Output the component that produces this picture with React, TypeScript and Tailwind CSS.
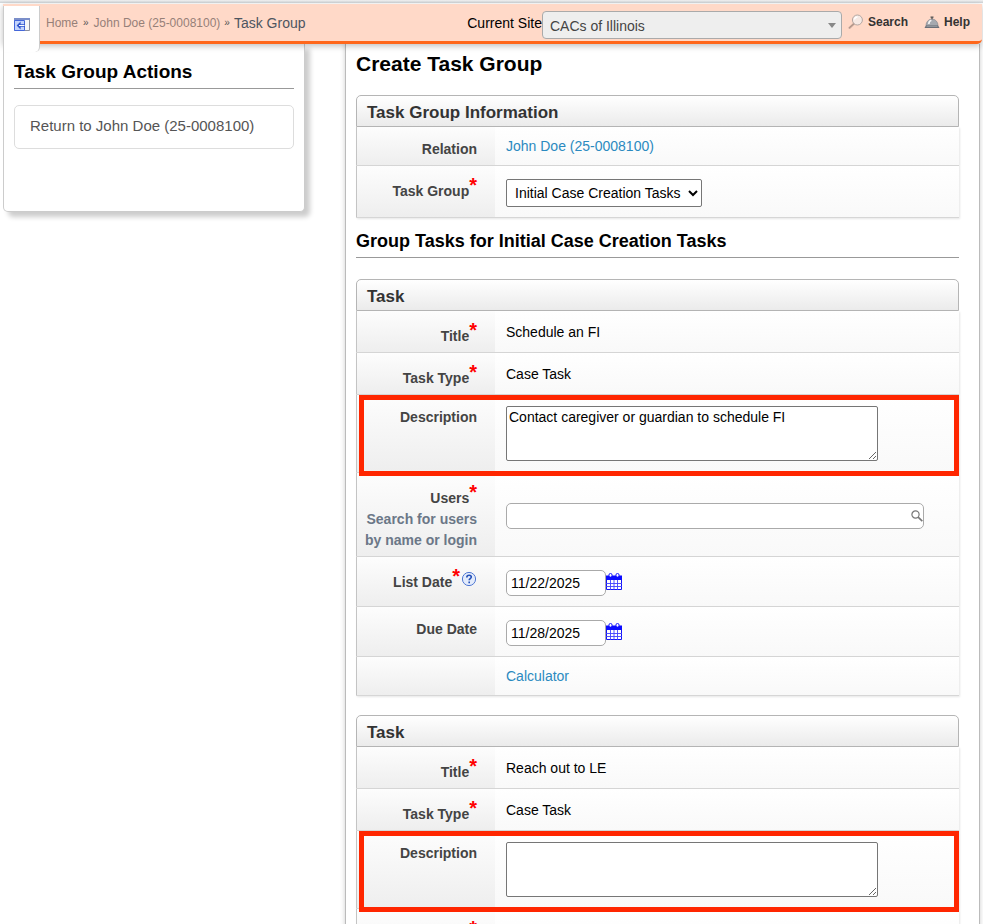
import React, { useId, useState } from "react";

type RowProps = {
  label?: string;
  hint?: string;
  htmlFor?: string;
  required?: boolean;
  help?: boolean;
  height: string;
  labelPad: string;
  highlight?: boolean;
  children?: React.ReactNode;
};

function Row({ label, hint, htmlFor, required, help, height, labelPad, highlight, children }: RowProps) {
  return (
    <div className={`relative flex border-b border-[#d6d6d6] bg-linear-to-b from-white to-[#f9f9f9] shadow-[1px_1px_2px_rgba(0,0,0,0.1)] ${height}`}>
      <div
        className={`w-[139px] shrink-0 border-l border-[#c4c4c4] bg-linear-to-b from-[#fdfdfd] to-[#eeeeee] pr-[18px] text-right text-sm leading-[21px] font-bold text-[#444] ${labelPad}`}
      >
        <label htmlFor={htmlFor} className="inline-flex items-start justify-end">
          {label}
          {required && <span className="-mt-[6px] h-4 text-[20px] leading-[21px] text-[#f00]">*</span>}
          {help && <HelpBadge />}
        </label>
        {hint && <div className="text-[#6b7787]">{hint}</div>}
      </div>
      <div className="flex min-w-0 flex-1 flex-col justify-center px-[11px] text-sm text-black">{children}</div>
      {highlight && <div className="pointer-events-none absolute inset-y-0 right-0 left-[3px] z-10 -mb-1 border-[5px] border-[#ff2600]" />}
    </div>
  );
}

function HelpBadge() {
  return (
    <svg viewBox="0 0 16 16" className="-mt-px ml-px h-4 w-4" aria-hidden="true">
      <circle cx="8" cy="8" r="6.6" fill="#e3ebfb" stroke="#4f77d3" strokeWidth="1" />
      <path d="M5.8 6.4c0-1.4 1-2.2 2.3-2.2s2.2.8 2.2 1.9c0 1.5-2.1 1.6-2.1 3.2M8.2 10.6v1.6" fill="none" stroke="#2450b8" strokeWidth="1.6" />
    </svg>
  );
}

function CalendarIcon() {
  return (
    <svg viewBox="0 0 16 18" className="h-[18px] w-4" aria-hidden="true">
      <path d="M.5 3.5h15v13H.5z" fill="#fff" stroke="#1212fa" />
      <path d="M0 2.5h16v4.5H0z" fill="#0c0cff" />
      <rect x="3" y=".5" width="3" height="3.6" rx="1.4" fill="#fff" stroke="#0c0cff" />
      <rect x="10" y=".5" width="3" height="3.6" rx="1.4" fill="#fff" stroke="#0c0cff" />
      <path d="M0 10.5h16M0 13.5h16M4.5 7v10M8 7v10M11.5 7v10" stroke="#4040ff" strokeWidth=".9" />
    </svg>
  );
}

function SectionTitle({ children }: { children: React.ReactNode }) {
  return (
    <h3 className="h-8 rounded-t-[5px] border border-[#b5b5b5] bg-linear-to-b from-white to-[#ebebeb] px-[10px] text-[17px] leading-[33px] font-bold text-[#333]">
      {children}
    </h3>
  );
}

function DateField({ id, initial }: { id: string; initial: string }) {
  const [value, setValue] = useState(initial);
  return (
    <div className="flex items-center pt-[3px]">
      <input
        id={id}
        value={value}
        onChange={(e) => setValue(e.target.value)}
        className="h-[26px] w-[100px] rounded-[5px] border border-[#aaa] bg-white px-1 text-sm"
      />
      <button type="button" aria-label="Choose date" className="-mt-[3px]">
        <CalendarIcon />
      </button>
    </div>
  );
}

function TaskSection({ title, description }: { title: string; description: string }) {
  const id = useId();
  const [text, setText] = useState(description);
  return (
    <section className="mb-[19px]">
      <SectionTitle>Task</SectionTitle>
      <Row label="Title" required height="h-[42px]" labelPad="pt-[15px]">
        {title}
      </Row>
      <Row label="Task Type" required height="h-[42px]" labelPad="pt-[15px]">
        Case Task
      </Row>
      <Row label="Description" htmlFor={`${id}-desc`} height="h-[78px]" labelPad="pt-3" highlight>
        <textarea
          id={`${id}-desc`}
          value={text}
          onChange={(e) => setText(e.target.value)}
          className="h-[55px] w-full max-w-[372px] rounded-[2px] border border-[#767676] bg-white px-[2px] py-0 text-sm"
        />
      </Row>
      <Row
        label="Users"
        required
        hint="Search for users by name or login"
        htmlFor={`${id}-users`}
        height="h-[84px]"
        labelPad="pt-[15px]"
      >
        <div className="relative mt-[2px] max-w-[418px]">
          <input id={`${id}-users`} className="block h-[26px] w-full rounded-[5px] border border-[#aaa] bg-white pr-5 pl-1 text-sm" />
          <svg viewBox="0 0 14 14" className="absolute top-[6px] right-0 h-[14px] w-[14px]" aria-hidden="true">
            <circle cx="5.5" cy="5.5" r="3.6" fill="none" stroke="#777" strokeWidth="1.2" />
            <path d="M8.1 8.1l4.2 4" stroke="#777" strokeWidth="1.6" />
          </svg>
        </div>
      </Row>
      <Row label="List Date" required help htmlFor={`${id}-list`} height="h-[50px]" labelPad="pt-[15px]">
        <DateField id={`${id}-list`} initial="11/22/2025" />
      </Row>
      <Row label="Due Date" htmlFor={`${id}-due`} height="h-[50px]" labelPad="pt-3">
        <DateField id={`${id}-due`} initial="11/28/2025" />
      </Row>
      <Row height="h-[39px]" labelPad="pt-3">
        <a href="#calculator" className="text-[#2b8ac0]">
          Calculator
        </a>
      </Row>
    </section>
  );
}

function Header() {
  return (
    <header className="relative z-20 mr-px ml-[3px] flex h-10 items-stretch rounded-br-[5px] border-b-[3px] border-[#ff671b] bg-[#ffd9c8] shadow-[0_2px_6px_rgba(0,0,0,0.25)]">
      <div className="mt-[2px] -mb-[10px] flex h-[46px] w-[37px] shrink-0 justify-center rounded-br-[5px] border-r border-l border-[#ccc] bg-white pt-3">
        <button type="button" aria-label="Collapse panel" className="h-[13px] w-4">
          <svg viewBox="0 0 16 13" className="h-[13px] w-4" aria-hidden="true">
            <path d="M.5 .5h15v12H.5z" fill="#f7f7f7" stroke="#8a8fa0" />
            <path d="M0 0h16v2H0z" fill="#7b8fca" />
            <path d="M.5 2.5h10v10H.5z" fill="#c3d3fc" stroke="#4467da" />
            <path d="M11 6.3H6.6V3.6L2.6 7.5l4 3.9V8.7H11z" fill="#3156cc" />
            <path d="M10.5 7.5H5" stroke="#fff" strokeWidth="1" />
          </svg>
        </button>
      </div>
      <nav aria-label="Breadcrumb" className="flex h-[38px] items-center gap-[5px] pl-[6px] text-xs text-[#968078]">
        <a href="#home">Home</a>
        <span className="text-[10px] text-[#555]">»</span>
        <a href="#case">John Doe (25-0008100)</a>
        <span className="-mx-px text-[10px] text-[#555]">»</span>
        <span className="text-sm text-[#4d5560]">Task Group</span>
      </nav>
      <div className="ml-auto flex h-9 items-center pr-3">
        <label htmlFor="site" className="pt-px text-sm text-black">
          Current Site
        </label>
        <div className="relative mt-[6px]">
          <select
            id="site"
            className="block h-7 w-[300px] appearance-none rounded-[4px] border border-[#aaa] bg-[#eee] pt-[2px] pl-[7px] text-sm text-[#444]"
          >
            <option>CACs of Illinois</option>
          </select>
          <span className="pointer-events-none absolute top-3 right-[6px] h-0 w-0 border-x-4 border-t-[5px] border-x-transparent border-t-[#888]" />
        </div>
        <a href="#search" className="ml-[6px] flex items-center gap-1 text-xs font-bold text-[#333]">
          <svg viewBox="0 0 16 16" className="h-4 w-4" aria-hidden="true">
            <path d="M5.8 9.8l-4.3 4" stroke="#d3b5a8" strokeWidth="2.4" strokeLinecap="round" />
            <path d="M5.8 9.8l-4.3 4" stroke="#8f7468" strokeWidth=".8" strokeLinecap="round" />
            <circle cx="9.4" cy="6" r="5" fill="#f6e9e4" stroke="#aaa09d" strokeWidth=".9" />
            <path d="M6.5 5.5a3 3 0 0 1 3-2.5" fill="none" stroke="#fff" strokeWidth="1.4" />
          </svg>
          Search
        </a>
        <a href="#help" className="ml-4 flex items-center gap-1 text-xs font-bold text-[#333]">
          <svg viewBox="0 0 16 14" className="h-[14px] w-4" aria-hidden="true">
            <path d="M2 10.5a6 6.5 0 0 1 12 0z" fill="#a5a9af" stroke="#858a92" strokeWidth=".7" />
            <path d="M4.8 9a3.5 4 0 0 1 2.6-3.8" fill="none" stroke="#f5f5f5" strokeWidth="1.6" />
            <path d="M6.5 2.2h3M8 2v2.2" stroke="#555" strokeWidth="1.3" />
            <path d="M2 10.3h12l1.5 2.7H.5z" fill="#6a6f78" />
            <path d="M2.5 11.2h11" stroke="#c9ccd0" strokeWidth=".6" />
          </svg>
          Help
        </a>
      </div>
    </header>
  );
}

export default function App() {
  return (
    <div className="min-h-screen bg-white font-['Liberation_Sans',Arial,sans-serif] text-black">
      <div className="h-1 border-b border-white bg-linear-to-b from-[#f2f2f2] to-[#cfd3d6]" />
      <Header />
      <div className="flex items-start">
        <aside className="ml-[3px] h-[168px] w-[302px] shrink-0 rounded-b-[5px] border border-t-0 border-[#ccc] bg-white px-[10px] pt-[14px] shadow-[5px_5px_5px_rgba(0,0,0,0.2)]">
          <h2 className="h-[31px] border-b border-[#999] text-[19px] leading-[28px] font-bold">Task Group Actions</h2>
          <a
            href="#return"
            className="mt-4 block h-11 rounded-[5px] border border-[#ddd] px-[15px] text-[15px] leading-[40px] whitespace-nowrap text-[#555]"
          >
            Return to John Doe (25-0008100)
          </a>
        </aside>
        <main className="mr-[3px] ml-10 min-w-0 flex-1 border-x border-[#bbb] bg-white px-[10px] shadow-[0_0_5px_rgba(0,0,0,0.2)]">
          <div className="mr-[10px]">
            <h1 className="h-[51px] pt-[5px] text-[21px] leading-[29px] font-bold">Create Task Group</h1>
            <section>
              <SectionTitle>Task Group Information</SectionTitle>
              <Row label="Relation" height="h-[39px]" labelPad="pt-3">
                <a href="#relation" className="text-[#2b8ac0]">
                  John Doe (25-0008100)
                </a>
              </Row>
              <Row label="Task Group" required htmlFor="group" height="h-[52px]" labelPad="pt-[15px]">
                <select id="group" className="mt-[2px] h-7 w-[196px] rounded-[2px] border border-[#767676] bg-white pl-1 text-sm">
                  <option>Initial Case Creation Tasks</option>
                </select>
              </Row>
            </section>
            <h2 className="mb-[21px] h-10 border-b border-[#999] pt-[9px] text-lg leading-[28px] font-bold">
              Group Tasks for Initial Case Creation Tasks
            </h2>
            <TaskSection title="Schedule an FI" description="Contact caregiver or guardian to schedule FI" />
            <TaskSection title="Reach out to LE" description="" />
          </div>
        </main>
      </div>
    </div>
  );
}
